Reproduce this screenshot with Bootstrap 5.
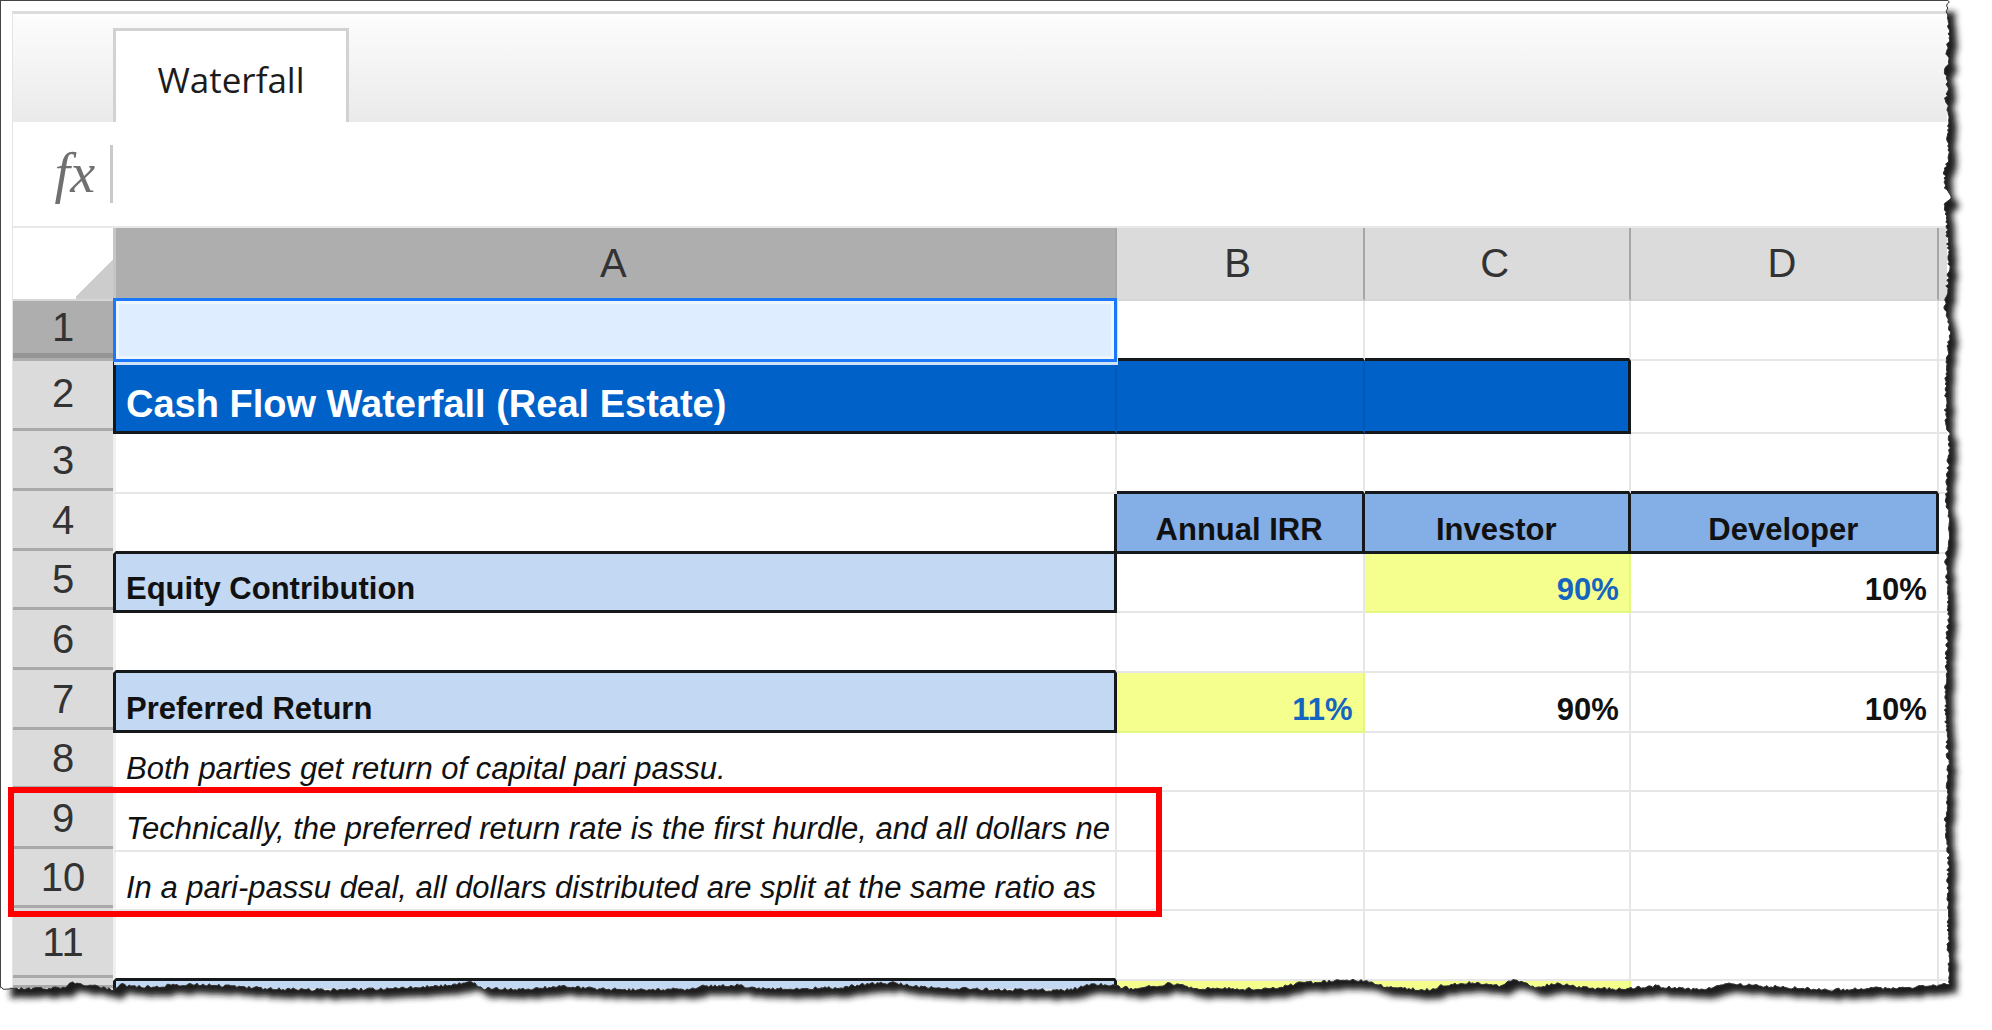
<!DOCTYPE html>
<html lang="en">
<head>
<meta charset="utf-8">
<meta name="viewport" content="width=device-width, initial-scale=1">
<title>Waterfall</title>
<link rel="stylesheet" href="https://cdn.jsdelivr.net/npm/bootstrap@5.3.0/dist/css/bootstrap.min.css">
<style>
  body { font-family: "Liberation Sans", Arial, sans-serif; overflow-x: hidden; }
  .paper { margin-right: 45px; padding: 10px 0 0 11px; border-top: 1px solid #444; border-left: 1px solid #444; }
  .sheet-app { border-top: 3px solid #dcdcdc; border-left: 1px solid #e4e4e4; }
  .tab-strip { height: 108px; padding: 14px 0 0 100px; background: linear-gradient(#fdfdfd, #eaeaea); }
  .sheet-tab { width: 236px; height: 94px; padding-top: 6px; border: 3px solid #d2d2d2; border-bottom: 0; background: #fff; color: #1c1c1c; font: 35px "Open Sans", sans-serif; }
  .formula-bar { height: 106px; border-bottom: 2px solid #e8e8e8; }
  .fx-label { width: 100px; height: 58px; padding: 0 15px 2px 0; border-right: 3px solid #c9c9c9; color: #707070; font: italic 56px "Liberation Serif", serif; }
  .formula-input { font-size: 31px; }
  .sheet { width: 100%; table-layout: fixed; border-collapse: separate; border-spacing: 0; font-size: 31px; line-height: 36px; color: #111; }
  .sheet tr { height: 60px; }
  .sheet tr.short-row { height: 59px; }
  .sheet tr.high-row { height: 73px; }
  .sheet tr.gap-row { height: 70px; }
  .sheet tr.cut-row { height: 10px; }
  .col-gutter { width: 100px; }
  .col-a { width: 51.89%; }
  .col-b { width: 12.83%; }
  .col-c { width: 13.76%; }
  .col-d { width: 15.93%; }
  .sheet th { padding: 0; background: #dbdbdb; color: #333; font-size: 40px; line-height: 44px; font-weight: 400; text-align: center; vertical-align: middle; }
  .sheet thead th { padding: 0 4px 2px 0; border-right: 2px solid #a6a6a6; border-bottom: 2px solid #d6d6d6; }
  .sheet thead th:last-child { border-right: 0; }
  .sheet thead th.corner { border-right: 0; background: #fff linear-gradient(135deg, #fff 50%, #ccc 50%) no-repeat right bottom / 37px 42px; }
  .sheet thead th.picked { background: #aeaeae; border-left: 3px solid #c6c6c6; }
  .sheet tbody th { padding-bottom: 9px; background: linear-gradient(#a9a9a9, #a9a9a9) no-repeat 0 calc(100% - 3px) / 100% 3px #dbdbdb; }
  .sheet tbody th.picked { background: linear-gradient(#969696, #969696) no-repeat 0 calc(100% - 3px) / 100% 5px #aeaeae; }
  .sheet td { padding: 0 10px 3px; border-right: 2px solid #e6e6e6; border-bottom: 2px solid #e6e6e6; vertical-align: bottom; text-align: right; white-space: nowrap; }
  .sheet td:last-child { border-right: 0; }
  .sheet td:nth-child(2) { padding-right: 0; border-left: 3px solid #f0f0f0; text-align: left; }
  .sheet td.title-cell { background: #0061c8; color: #fff; font-size: 38px; line-height: 44px; padding-bottom: 5px; border-right-color: #0059b8; }
  .sheet td.head-cell { background: #83aee6; text-align: center; }
  .sheet td.label-cell { background: #c2d8f3; }
  .sheet td.input-cell { background: #f5ff8e; color: #1565c0; border-right-color: #e2f882; border-bottom-color: #e2f882; }
  .sheet td.line-b { border-bottom: 3px solid #15191c; }
  .sheet td.line-r { border-right: 3px solid #15191c; }
  .sheet td.line-l:nth-child(2) { border-left: 3px solid #15191c; }
  .clip-text { overflow: hidden; }
  .selection { position: absolute; inset: -3px -2px -3px -3px; border: 3px solid #1a78ff; background: #deedff; box-shadow: inset 0 0 0 3px #eef6ff, 1px 3px 0 #cfe2f8; z-index: 2; }
  .callout-box { position: absolute; left: -108px; right: -47px; top: -5px; height: 130px; border: 6px solid #f00; z-index: 3; }
  .torn-edge { position: absolute; left: 0; top: 0; width: 100%; height: calc(100% + 40px); z-index: 4; pointer-events: none; }
  .paper-wrap { margin-bottom: 40px; }
</style>
<script src="https://cdn.jsdelivr.net/npm/bootstrap@5.3.0/dist/js/bootstrap.bundle.min.js"></script>
</head>
<body class="bg-white">
<div class="paper-wrap position-relative">
  <main class="paper" id="paper">
    <div class="sheet-app">
      <div class="tab-strip d-flex" role="tablist">
        <button type="button" class="sheet-tab" role="tab" aria-selected="true">Waterfall</button>
      </div>
      <div class="formula-bar d-flex align-items-center">
        <label class="fx-label d-flex align-items-center justify-content-end flex-shrink-0" for="formula">fx</label>
        <input id="formula" class="formula-input form-control border-0 shadow-none rounded-0 flex-grow-1" type="text">
      </div>
      <table class="sheet">
        <colgroup><col class="col-gutter"><col class="col-a"><col class="col-b"><col class="col-c"><col class="col-d"><col></colgroup>
        <thead>
          <tr class="high-row"><th class="corner"></th><th class="picked" scope="col">A</th><th scope="col">B</th><th scope="col">C</th><th scope="col">D</th><th></th></tr>
        </thead>
        <tbody>
          <tr><th class="picked" scope="row">1</th><td class="position-relative"><div class="selection"></div></td><td class="line-b"></td><td class="line-b"></td><td></td><td></td></tr>
          <tr class="high-row"><th scope="row">2</th><td class="title-cell line-l line-b fw-bold">Cash Flow Waterfall (Real Estate)</td><td class="title-cell line-b"></td><td class="title-cell line-b line-r"></td><td></td><td></td></tr>
          <tr><th scope="row">3</th><td></td><td class="line-b"></td><td class="line-b"></td><td class="line-b"></td><td></td></tr>
          <tr><th scope="row">4</th><td class="line-r line-b"></td><td class="head-cell line-r line-b fw-bold">Annual IRR</td><td class="head-cell line-r line-b fw-bold">Investor</td><td class="head-cell line-r line-b fw-bold">Developer</td><td></td></tr>
          <tr class="short-row"><th scope="row">5</th><td class="label-cell line-l line-r line-b fw-bold">Equity Contribution</td><td></td><td class="input-cell fw-bold">90%</td><td class="fw-bold">10%</td><td></td></tr>
          <tr><th scope="row">6</th><td class="line-b"></td><td></td><td></td><td></td><td></td></tr>
          <tr><th scope="row">7</th><td class="label-cell line-l line-r line-b fw-bold">Preferred Return</td><td class="input-cell fw-bold">11%</td><td class="fw-bold">90%</td><td class="fw-bold">10%</td><td></td></tr>
          <tr class="short-row"><th scope="row">8</th><td class="fst-italic">Both parties get return of capital pari passu.</td><td></td><td></td><td></td><td></td></tr>
          <tr><th scope="row">9</th><td class="fst-italic position-relative"><div class="clip-text">Technically, the preferred return rate is the first hurdle, and all dollars ne</div><div class="callout-box"></div></td><td></td><td></td><td></td><td></td></tr>
          <tr class="short-row"><th scope="row">10</th><td class="fst-italic"><div class="clip-text">In a pari-passu deal, all dollars distributed are split at the same ratio as</div></td><td></td><td></td><td></td><td></td></tr>
          <tr class="gap-row"><th scope="row">11</th><td class="line-b"></td><td></td><td></td><td></td><td></td></tr>
          <tr class="cut-row"><th class="p-0"></th><td class="label-cell line-l line-r p-0"></td><td class="input-cell p-0"></td><td class="input-cell p-0"></td><td class="p-0"></td><td class="p-0"></td></tr>
        </tbody>
      </table>
    </div>
  </main>
  <svg class="torn-edge" id="torn" aria-hidden="true">
    <defs>
      <clipPath id="outside"><path id="outsidePath" clip-rule="evenodd"/></clipPath>
      <filter id="soft" x="-5%" y="-5%" width="110%" height="110%"><feGaussianBlur stdDeviation="3"/></filter>
    </defs>
    <g clip-path="url(#outside)">
      <rect width="100%" height="100%" fill="#fff"/>
      <path id="shadowPath" fill="#1c1c1c" filter="url(#soft)"/>
    </g>
    <path id="edgePath" fill="none" stroke="#333" stroke-width="1"/>
  </svg>
</div>
<script>
  // Depth of the tear along the bottom edge: [share of the width, px above the lowest point]
  const tear = [[0,2],[.006,1],[.033,2],[.037,7],[.043,5],[.051,3],[.058,0],[.062,5],[.077,3],[.098,6],[.118,4],[.139,1],[.177,0],[.205,2],[.226,4],[.242,8],[.248,1],[.27,1],[.29,4],[.308,1],[.33,0],[.354,1],[.362,4],[.378,5],[.388,1],[.43,2],[.445,6],[.458,7],[.473,3],[.514,0],[.549,0],[.562,6],[.568,5],[.582,1],[.6,6],[.618,1],[.652,1],[.668,7],[.698,10],[.714,2],[.736,0],[.74,4],[.756,8],[.77,4],[.777,10],[.788,3],[.8,6],[.815,2],[.836,1],[.849,4],[.872,0],[.886,6],[.906,4],[.94,0],[.963,2],[.974,1],[1,6]];
  // Horizontal wander of the right edge: [share of the height, px]
  const side = [[0,2],[.012,0],[.036,3],[.055,-1],[.061,3],[.072,-2],[.09,2],[.1,-1],[.118,3],[.14,0],[.155,3],[.174,-2],[.191,-1],[.199,4],[.206,-1],[.24,1],[.27,3],[.31,-2],[.33,3],[.37,0],[.42,-1],[.44,3],[.5,0],[.54,3],[.56,-1],[.62,2],[.66,0],[.72,-1],[.78,2],[.83,-1],[.86,2],[.92,1],[1,3]];
  let seed = 7;
  const rnd = () => (seed = (seed * 16807) % 2147483647) / 2147483647 - .5;
  const at = (list, t) => {
    let i = 1;
    while (i < list.length - 1 && list[i][0] < t) i++;
    const a = list[i - 1], b = list[i];
    return a[1] + (b[1] - a[1]) * (t - a[0]) / (b[0] - a[0]);
  };
  function drawTear() {
    seed = 7;
    const paper = document.getElementById('paper');
    const w = paper.offsetWidth, h = paper.offsetHeight, full = w + 45;
    const edge = [];
    for (let y = 0; y < h - 6; y += 2) edge.push([w - .5 + at(side, y / h) + rnd() * 3, y]);
    for (let x = w; x > 0; x -= 2) edge.push([x, h - 1 - at(tear, x / w) + rnd() * 3]);
    const line = edge.map(p => p[0].toFixed(1) + ' ' + p[1].toFixed(1)).join('L');
    const shape = 'M0 0L' + line + 'L0 ' + (h - 2) + 'Z';
    const shadow = 'M3 3L' + edge.map(p => p[0].toFixed(1) + ' ' + Math.max(3, p[1]).toFixed(1)).join('L') + 'L3 ' + (h - 4) + 'Z';
    document.getElementById('outsidePath').setAttribute('d', 'M0 0H' + full + 'V' + (h + 40) + 'H0Z' + shape);
    const s = document.getElementById('shadowPath');
    s.setAttribute('d', shadow);
    s.setAttribute('transform', 'translate(8 9)');
    document.getElementById('edgePath').setAttribute('d', 'M' + line);
  }
  drawTear();
  addEventListener('resize', drawTear);
</script>
</body>
</html>
